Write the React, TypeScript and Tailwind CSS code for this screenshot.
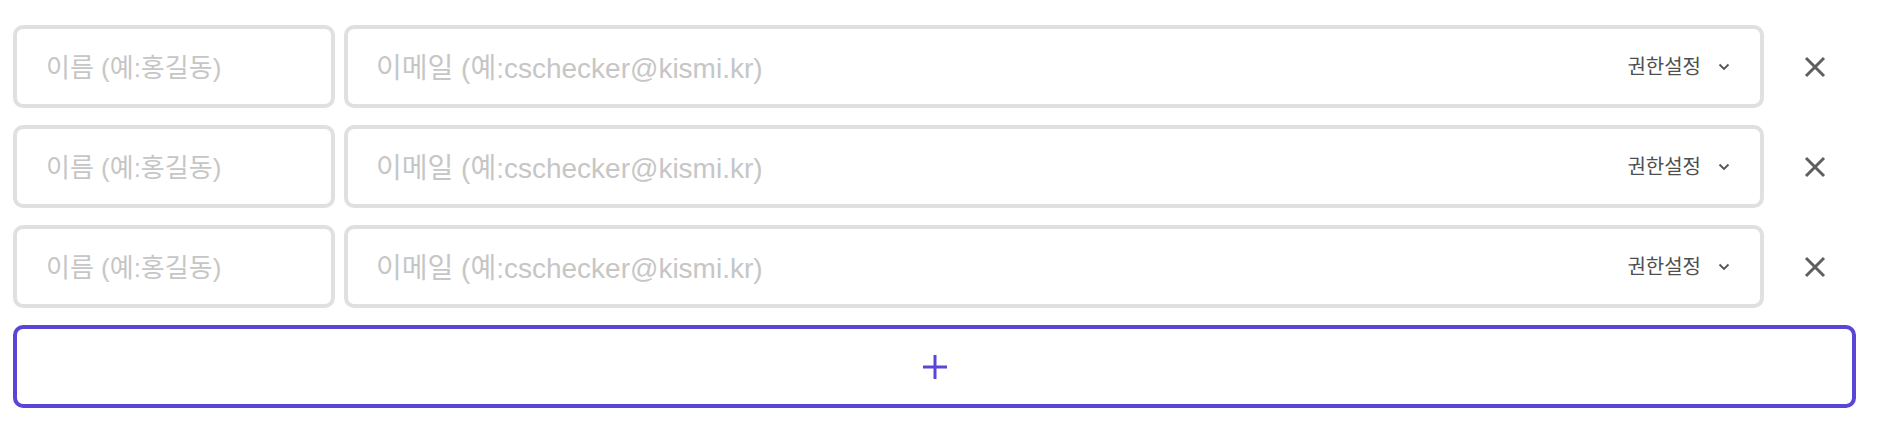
import { useState } from "react";

type Member = {
  id: number;
};

const font = "font-['Liberation_Sans','Noto_Sans_CJK_KR',sans-serif]";

const CloseIcon = () => (
  <svg width="22" height="22" viewBox="0 0 22 22" fill="none">
    <path d="M2 2L20 20M20 2L2 20" stroke="#5f5f5f" strokeWidth="3" />
  </svg>
);

const PlusIcon = () => (
  <svg width="24" height="24" viewBox="0 0 24 24" fill="none">
    <path d="M12 0V24M0 12H24" stroke="#5a46d6" strokeWidth="3" />
  </svg>
);

const Chevron = () => (
  <svg width="12" height="8" viewBox="0 0 12 8" fill="none">
    <path d="M1.5 1.5L6 6L10.5 1.5" stroke="#555555" strokeWidth="1.8" />
  </svg>
);

const MemberRow = ({ onRemove }: { onRemove: () => void }) => (
  <div className="flex gap-[9px]">
    <div className="flex h-[83px] w-[322px] flex-none items-center rounded-[10px] border-4 border-[#e0e0e0] bg-white pl-[29px]">
      <input
        className="mt-[4px] w-full bg-transparent text-[26px] text-[#333] outline-none placeholder:text-[#c6c6c6]"
        placeholder="이름 (예:홍길동)"
      />
    </div>
    <div className="flex h-[83px] flex-1 items-center rounded-[10px] border-4 border-[#e0e0e0] bg-white pl-[28px] pr-[30px]">
      <input
        className="mt-[4px] min-w-0 flex-1 bg-transparent text-[28px] text-[#333] outline-none placeholder:text-[#c6c6c6]"
        placeholder="이메일 (예:cschecker@kismi.kr)"
      />
      <button className="flex items-center gap-[17px] text-[20px] text-[#4f4f4f]">
        권한설정
        <Chevron />
      </button>
    </div>
    <button className="flex w-[83px] flex-none items-center pl-[31px]" onClick={onRemove}>
      <CloseIcon />
    </button>
  </div>
);

export default function App() {
  const [members, setMembers] = useState<Member[]>([{ id: 1 }, { id: 2 }, { id: 3 }]);

  return (
    <div className={`min-h-[438px] w-full bg-white pl-[13px] pr-[22px] pt-[25px] ${font}`}>
      <div className="flex flex-col gap-[17px]">
        {members.map((m) => (
          <MemberRow key={m.id} onRemove={() => setMembers(members.filter((x) => x.id !== m.id))} />
        ))}
        <button
          className="flex h-[83px] items-center justify-center rounded-[10px] border-4 border-[#5a46d6] bg-white"
          onClick={() => setMembers([...members, { id: Date.now() }])}
        >
          <PlusIcon />
        </button>
      </div>
    </div>
  );
}
